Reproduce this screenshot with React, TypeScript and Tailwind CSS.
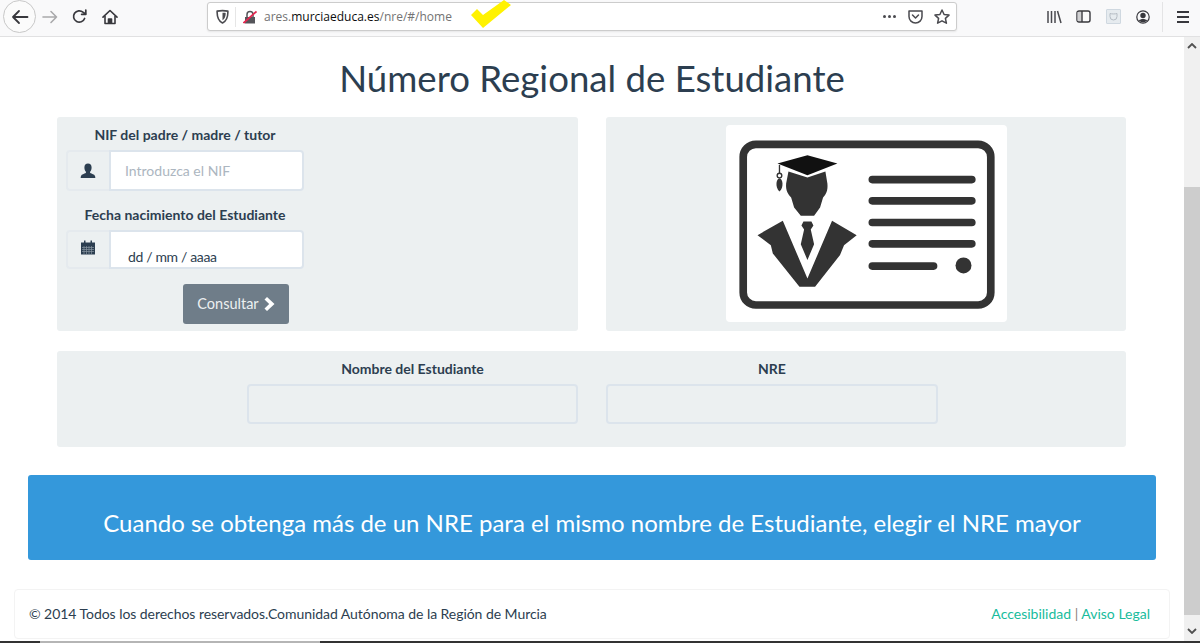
const Back = () => (
  <div className="ml-[3px] flex h-[33px] w-[33px] items-center justify-center rounded-full border border-[#c8c8c8] bg-[#fbfbfb]">
    <svg width="18" height="16" viewBox="0 0 18 16" fill="none" stroke="#38383d" strokeWidth="1.8" strokeLinecap="round" strokeLinejoin="round">
      <path d="M16.5 8H2M8 2 2 8l6 6" />
    </svg>
  </div>
);

const Forward = () => (
  <svg className="ml-[6px]" width="16" height="14" viewBox="0 0 16 14" fill="none" stroke="#a9a9ab" strokeWidth="1.6" strokeLinecap="round" strokeLinejoin="round">
    <path d="M1 7h13.5M9 1.5 14.5 7 9 12.5" />
  </svg>
);

const Reload = () => (
  <svg className="ml-[14px]" width="15" height="15" viewBox="0 0 15 15" fill="none" stroke="#38383d" strokeWidth="1.7" strokeLinecap="round" strokeLinejoin="round">
    <path d="M12.6 9.5A5.7 5.7 0 1 1 11 3.2L13.5 5" />
    <path d="M13.8 1v4.3H9.6" />
  </svg>
);

const HomeIcon = () => (
  <svg className="ml-[15px]" width="16" height="16" viewBox="0 0 16 16" fill="none" stroke="#38383d" strokeWidth="1.6" strokeLinejoin="round">
    <path d="M1 8.2 8 1.5l7 6.7" strokeLinecap="round" />
    <path d="M3 7v7.5h10V7" />
    <path d="M6.5 14.5v-4.5h3v4.5" fill="#38383d" />
  </svg>
);

const Shield = () => (
  <svg width="13" height="15" viewBox="0 0 12 14" fill="none" stroke="#4a4a4f" strokeWidth="1.5" strokeLinejoin="round">
    <path d="M1 2c3-.6 7-.6 10 0 .2 5-1.2 9-5 11C2.200 11 .8 7 1 2Z" />
    <path d="M6 3.500c1 0 2.300 0 3 .2 0 3-.8 5.300-3 6.800Z" fill="#4a4a4f" stroke="none" />
  </svg>
);

const BrokenLock = () => (
  <svg width="14" height="14" viewBox="0 0 14 14" fill="none">
    <path d="M2 7h10v6.500H2Z" fill="#55555a" />
    <path d="M4 7V4.500a3 3 0 0 1 6 0V7" stroke="#55555a" strokeWidth="1.500" />
    <path d="M.5 13 13.500 1.500" stroke="#e22850" strokeWidth="1.700" />
  </svg>
);

const Pocket = () => (
  <svg width="15" height="14" viewBox="0 0 15 14" fill="none" stroke="#4a4a4f" strokeWidth="1.500" strokeLinecap="round" strokeLinejoin="round">
    <path d="M1 1h13v5.500a6.500 6.500 0 0 1-13 0Z" />
    <path d="m4.500 5 3 3 3-3" />
  </svg>
);

const Star = () => (
  <svg width="16" height="15" viewBox="0 0 16 15" fill="none" stroke="#4a4a4f" strokeWidth="1.500" strokeLinejoin="round">
    <path d="m8 1 2.100 4.500 4.900.6-3.600 3.300 1 4.800L8 11.800l-4.400 2.400 1-4.800L1 6.100l4.900-.6Z" />
  </svg>
);

const Library = () => (
  <svg width="15" height="14" viewBox="0 0 15 14" fill="none" stroke="#4a4a4f" strokeWidth="1.500">
    <path d="M1 1v12M4.500 1v12M8 1v12M10.500 1 14 13" />
  </svg>
);

const SidebarIcon = () => (
  <svg width="15" height="13" viewBox="0 0 15 13" fill="none" stroke="#38383d" strokeWidth="1.400">
    <rect x="1" y="1" width="13" height="11" rx="2" />
    <path d="M1.500 2h4v9h-4Z" fill="#d0d0d2" stroke="none" />
    <path d="M6 1v11" />
  </svg>
);

const Ext = () => (
  <div className="flex h-[15px] w-[15px] items-center justify-center rounded-[1px] border border-[#cfd8e0] bg-[#e6ebef]">
    <svg width="9" height="9" viewBox="0 0 9 9" fill="none" stroke="#b5bcc4" strokeWidth="1">
      <path d="M1 1.500c2 .6 5 .6 7 0v3a3.500 3.500 0 0 1-7 0Z" />
    </svg>
  </div>
);

const Account = () => (
  <svg width="14" height="14" viewBox="0 0 14 14" fill="none">
    <circle cx="7" cy="7" r="6.200" stroke="#38383d" strokeWidth="1.200" />
    <circle cx="7" cy="5.500" r="2.700" fill="#38383d" />
    <path d="M2.800 10.500c2-2 6.400-2 8.400 0-2 2.400-6.400 2.400-8.400 0Z" fill="#38383d" />
  </svg>
);

const Toolbar = () => (
  <div className="relative flex h-[37px] items-center border-b border-[#e1e1e2] bg-[#f9f9fa] pb-[3px]">
    <Back />
    <Forward />
    <Reload />
    <HomeIcon />
    <div className="ml-[89px] flex h-[29px] w-[750px] items-center rounded-[3px] border border-[#cccccc] bg-white pl-[8px] pr-[6px] shadow-[0_1px_2px_rgba(0,0,0,0.08)]">
      <Shield />
      <div className="ml-[6px] h-[20px] w-px bg-[#e6e6e6]" />
      <div className="ml-[7px]"><BrokenLock /></div>
      <div className="ml-[7px] font-['Open_Sans',sans-serif] text-[12px] text-[#737373]">
        ares.<span className="text-[#0c0c0d]">murciaeduca.es</span>/nre/#/home
      </div>
      <div className="ml-auto flex items-center gap-[11px]">
        <div className="mr-[1px] flex gap-[2px]">
          <span className="h-[3px] w-[3px] rounded-full bg-[#4a4a4f]" />
          <span className="h-[3px] w-[3px] rounded-full bg-[#4a4a4f]" />
          <span className="h-[3px] w-[3px] rounded-full bg-[#4a4a4f]" />
        </div>
        <Pocket />
        <Star />
      </div>
    </div>
    <div className="ml-[90px]"><Library /></div>
    <div className="ml-[14px]"><SidebarIcon /></div>
    <div className="ml-[15px]"><Ext /></div>
    <div className="ml-[15px]"><Account /></div>
    <div className="ml-[12px] h-[30px] w-px bg-[#e4e4e5]" />
    <div className="ml-[14px] flex flex-col gap-[3px]">
      <span className="h-[2px] w-[12px] bg-[#38383d]" />
      <span className="h-[2px] w-[12px] bg-[#38383d]" />
      <span className="h-[2px] w-[12px] bg-[#38383d]" />
    </div>
    {/* yellow tick painted over the screenshot */}
    <svg className="absolute left-[470px] top-0" width="42" height="30" viewBox="470 0 42 30">
      <polygon points="471,15 483,28 511,5 504,0 483,15 477,9" fill="#fff200" />
    </svg>
  </div>
);

const UserGlyph = () => (
  <svg width="16" height="16" viewBox="0 0 16 16" fill="#2c3e50">
    <path d="M8 .5c2.300 0 3.600 1.700 3.600 3.900 0 1.600-.6 3.300-1.500 4.300v1.400c1.800.7 4.200 1.400 4.900 2.800.300.700.300 1.400.300 2.100H.7c0-.7 0-1.400.3-2.100.7-1.400 3.100-2.100 4.900-2.800V8.700C5 7.700 4.400 6 4.400 4.400 4.400 2.200 5.700.5 8 .5Z" />
  </svg>
);

const CalendarGlyph = () => (
  <svg width="14" height="15" viewBox="0 0 14 15">
    <path d="M0 2.500h14v3H0Z" fill="#2c3e50" />
    <path d="M3 .5h1.500v3H3ZM9.500.5H11v3H9.500Z" fill="#2c3e50" />
    <path d="M0 5h14v9.500H0Z" fill="#2c3e50" />
    <path d="M1 7.500h12M1 9.500h12M1 11.500h12M3 6v8M5.500 6v8M8 6v8M10.500 6v8" stroke="#8895a0" strokeWidth=".7" />
  </svg>
);

const CardImage = () => (
  <svg className="mb-[1px] h-[197px] w-[281px] rounded-[4px] bg-white" viewBox="18 14 843 592">
    <rect x="69" y="72" width="744" height="483" rx="38" fill="none" stroke="#333" strokeWidth="23" />
    <path d="M262 105 352 130 262 165 172 130Z" fill="#111" />
    <path d="M178 134v24" stroke="#333" strokeWidth="4" />
    <circle cx="178" cy="166" r="7" fill="#fff" stroke="#333" strokeWidth="4" />
    <path d="M178 174c9 0 15 26 0 40-15-14-9-40 0-40Z" fill="#333" />
    <path d="M205 154 262 172 316 154 322 190C324 212 318 222 309 232L300 262 282 287H242L222 262 213 232C204 222 196 212 198 190Z" fill="#333" />
    <path d="M188 302 262 475 336 302 410 345 372 375 360 405 285 500H238L158 400 152 375 112 345Z" fill="#333" />
    <path d="M250 304h24l6 12-8 12 10 44-20 48-20-48 10-44-8-12Z" fill="#333" />
    <g stroke="#333" strokeWidth="23" strokeLinecap="round">
      <path d="M457 178H756M457 242H756M457 307H756M457 371H756M457 438H641" />
    </g>
    <circle cx="731" cy="436" r="24" fill="#333" />
  </svg>
);

const Label = ({ children }: { children: string }) => (
  <div className="text-center text-[14px] font-bold leading-[20px] text-[#2c3e50]">{children}</div>
);

const Addon = ({ children }: { children: React.ReactNode }) => (
  <div className="flex w-[43px] items-center justify-center rounded-l-[4px] border-2 border-r-0 border-[#e5eaee] bg-[#ecf0f1] pr-[2px]">{children}</div>
);

export default function App() {
  return (
    <div className="h-[643px] w-[1200px] overflow-hidden bg-white font-['Lato',sans-serif] text-[#2c3e50]">
      <Toolbar />
      <div className="flex h-[604px]">
        <div className="w-[1184px]">
          <h1 className="mt-[18px] text-center text-[36.600px] leading-[46px]">Número Regional de Estudiante</h1>

          <div className="ml-[57px] mt-[16px] flex w-[1069px] gap-[28px]">
            <div className="h-[214px] w-[521px] rounded-[3px] bg-[#ecf0f1] pl-[9px] pt-[8px]">
              <div className="w-[238px]">
                <Label>NIF del padre / madre / tutor</Label>
                <div className="mt-[5px] flex h-[41px]">
                  <Addon><UserGlyph /></Addon>
                  <div className="flex flex-1 items-center rounded-r-[4px] border-2 border-[#dce4ec] bg-white pl-[14px] text-[14px] text-[#acb6c0]">
                    Introduzca el NIF
                  </div>
                </div>
                <div className="mt-[14px]"><Label>Fecha nacimiento del Estudiante</Label></div>
                <div className="mt-[5px] flex h-[39px]">
                  <Addon><div className="mb-[4px]"><CalendarGlyph /></div></Addon>
                  <div className="flex flex-1 items-end rounded-r-[4px] border-2 border-[#dce4ec] bg-white pl-[17px] text-[14px] leading-[20px] tracking-[-0.35px]">
                    dd / mm / aaaa
                  </div>
                </div>
                <div className="ml-[117px] mt-[15px] flex h-[40px] w-[106px] items-center justify-center gap-[5px] rounded-[3px] bg-[#6f7d89] pb-[1px] text-[14.500px] text-[#ecf0f1]">
                  Consultar
                  <svg width="11" height="14" viewBox="0 0 11 14" fill="#fff"><path d="M3 0 10.500 7 3 14 .5 11.500 5.200 7 .5 2.500Z" /></svg>
                </div>
              </div>
            </div>
            <div className="flex h-[214px] w-[520px] items-center justify-center rounded-[3px] bg-[#ecf0f1]">
              <CardImage />
            </div>
          </div>

          <div className="ml-[57px] mt-[20px] flex h-[96px] w-[1069px] gap-[28px] rounded-[3px] bg-[#ecf0f1] pl-[190px] pt-[8px]">
            <div className="w-[331px]">
              <Label>Nombre del Estudiante</Label>
              <div className="mt-[5px] h-[40px] rounded-[4px] border-2 border-[#dce4ec] bg-[#ecf0f1]" />
            </div>
            <div className="w-[332px]">
              <Label>NRE</Label>
              <div className="mt-[5px] h-[40px] rounded-[4px] border-2 border-[#dce4ec] bg-[#ecf0f1]" />
            </div>
          </div>

          <div className="ml-[28px] mt-[28px] flex h-[85px] w-[1128px] items-center justify-center rounded-[3px] bg-[#3498db] pt-[10px] text-[24px] text-white">
            Cuando se obtenga más de un NRE para el mismo nombre de Estudiante, elegir el NRE mayor
          </div>

          <div className="ml-[14px] mt-[29px] flex h-[50px] w-[1156px] items-center justify-between rounded-[4px] border border-[#f3f3f3] pb-[1px] pl-[14px] pr-[19px] text-[14px]">
            <span className="tracking-[-0.05px]">© 2014 Todos los derechos reservados.Comunidad Autónoma de la Región de Murcia</span>
            <span className="text-[#8a7f78]">
              <span className="text-[#18bc9c]">Accesibilidad</span> | <span className="text-[#18bc9c]">Aviso Legal</span>
            </span>
          </div>
        </div>

        <div className="relative flex w-[16px] flex-col bg-[#f0f0f0]">
          <div className="flex h-[17px] items-center justify-center">
            <svg width="10" height="6" viewBox="0 0 10 6" fill="none" stroke="#505050" strokeWidth="1.800"><path d="m1 5 4-4 4 4" /></svg>
          </div>
          <div className="mt-[133px] h-[428px] bg-[#cdcdcd]" />
          <div className="mt-auto flex h-[20px] items-center justify-center pb-[1px]">
            <svg width="10" height="6" viewBox="0 0 10 6" fill="none" stroke="#505050" strokeWidth="1.800"><path d="m1 1 4 4 4-4" /></svg>
          </div>
        </div>
      </div>
      <div className="flex h-[2px]">
        <div className="w-[40px] bg-[#333]" />
        <div className="w-[280px] bg-[#b5b5b5]" />
        <div className="flex-1 bg-[#333]" />
      </div>
    </div>
  );
}
